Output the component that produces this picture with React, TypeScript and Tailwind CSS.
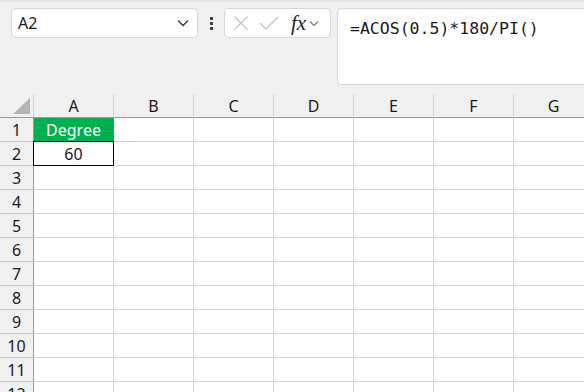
import React from "react";

const cols = ["A", "B", "C", "D", "E", "F", "G"];
const rows = [1, 2, 3, 4, 5, 6, 7, 8, 9, 10, 11, 12];

export default function App() {
  return (
    <div
      className="relative w-[584px] h-[392px] overflow-hidden bg-[#f0f0f0]"
      style={{ fontFamily: '"Noto Sans", "Open Sans", sans-serif' }}
    >
      <div className="h-[3px] bg-gradient-to-b from-[#dedede] to-[#f0f0f0]" />
      {/* toolbar */}
      <div className="flex items-start h-[91px] pt-[5px]">
        <div className="ml-[11px] w-[187px] h-[30px] bg-white border border-[#d6d6d6] rounded-[5px] flex items-center pl-[6px] pr-[8px]">
          <span className="text-[16px] text-[#1a1a1a] leading-none">A2</span>
          <svg className="ml-auto" width="12" height="8" viewBox="0 0 12 8">
            <path d="M1 1.5 L6 6.5 L11 1.5" fill="none" stroke="#333" strokeWidth="1.3" />
          </svg>
        </div>
        <div className="w-[26px] h-[30px] flex flex-col items-center justify-center gap-[2px]">
          <div className="w-[3px] h-[3px] bg-[#444]" />
          <div className="w-[3px] h-[3px] bg-[#444]" />
          <div className="w-[3px] h-[3px] bg-[#444]" />
        </div>
        <div className="w-[107px] h-[30px] bg-white border border-[#d6d6d6] rounded-[5px] flex items-center pl-[8px]">
          <svg width="16" height="16" viewBox="0 0 16 16">
            <path d="M1.5 1.5 L14.5 14.5 M14.5 1.5 L1.5 14.5" stroke="#c4c4c4" strokeWidth="1.3" fill="none" />
          </svg>
          <svg className="ml-[10px]" width="20" height="16" viewBox="0 0 20 16">
            <path d="M1 8 L7 14 L19 2" stroke="#c4c4c4" strokeWidth="1.3" fill="none" />
          </svg>
          <span
            className="ml-[12px] text-[21px] italic text-[#222] leading-none"
            style={{ fontFamily: '"Liberation Serif", "DejaVu Serif", serif' }}
          >
            fx
          </span>
          <svg className="ml-[3px]" width="10" height="7" viewBox="0 0 10 7">
            <path d="M1 1.5 L5 5.5 L9 1.5" fill="none" stroke="#777" strokeWidth="1.1" />
          </svg>
        </div>
        <div className="ml-[6px] flex-1 h-[77px] bg-white border border-[#d6d6d6] border-r-0 rounded-l-[5px] pl-[12px] pt-[7px]">
          <span
            className="text-[16.5px] text-[#1a1a1a] leading-none"
            style={{ fontFamily: '"DejaVu Sans Mono", "Liberation Mono", monospace' }}
          >
            =ACOS(0.5)*180/PI()
          </span>
        </div>
      </div>
      {/* grid */}
      <div className="grid grid-cols-[34px_repeat(7,80px)] auto-rows-[24px] text-[16px] text-[#1a1a1a]">
        <div className="relative border-r border-b border-r-[#d0d0d0] border-b-[#9a9a9a] bg-[#f0f0f0]">
          <svg className="absolute right-[3px] bottom-[3px]" width="17" height="16" viewBox="0 0 17 16">
            <path d="M17 0 L17 16 L0 16 Z" fill="#b4b4b4" />
          </svg>
        </div>
        {cols.map((c) => (
          <div
            key={c}
            className="flex items-center justify-center border-r border-b border-r-[#d0d0d0] border-b-[#9a9a9a] bg-[#f0f0f0]"
          >
            {c}
          </div>
        ))}
        {rows.map((r) => (
          <React.Fragment key={r}>
            <div className="flex items-center justify-center border-r border-b border-r-[#9a9a9a] border-b-[#c8c8c8] bg-[#f0f0f0]">
              {r}
            </div>
            {cols.map((c) => {
              if (r === 1 && c === "A")
                return (
                  <div key={c} className="flex items-center justify-center bg-[#00b050] text-white border-r border-b border-[#00b050]">
                    Degree
                  </div>
                );
              if (r === 2 && c === "A")
                return (
                  <div key={c} className="relative flex items-center justify-center bg-white border-r border-b border-[#d4d4d4]">
                    60
                    <div className="absolute left-[-1px] top-[-1px] right-[-1px] bottom-[-1px] border-[1.5px] border-black" />
                  </div>
                );
              return <div key={c} className="bg-white border-r border-b border-[#d4d4d4]" />;
            })}
          </React.Fragment>
        ))}
      </div>
    </div>
  );
}
